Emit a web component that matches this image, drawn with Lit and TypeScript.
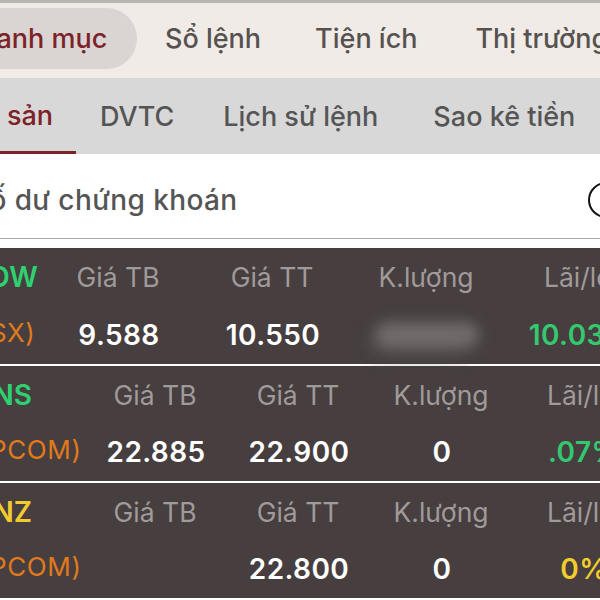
import { LitElement, html, css } from "lit";
import { customElement } from "lit/decorators.js";

type Row = {
  code: string;
  market: string;
  avg: string;
  price: string;
  qty: string;
  pnl: string;
  tone: string;
  wide?: boolean;
};

const ROWS: Row[] = [
  { code: "VOW", market: "(HSX)", avg: "9.588", price: "10.550", qty: "", pnl: "10.03%", tone: "up", wide: true },
  { code: "BNS", market: "(UPCOM)", avg: "22.885", price: "22.900", qty: "0", pnl: ".07%", tone: "up" },
  { code: "BNZ", market: "(UPCOM)", avg: "", price: "22.800", qty: "0", pnl: "0%", tone: "flat" },
];

@customElement("app-root")
export class AppRoot extends LitElement {
  renderRow(r: Row) {
    return html`
      <div class="row ${r.wide ? "wide" : ""}">
        <div class="code ${r.tone}">${r.code}</div>
        <div class="head">Giá TB</div>
        <div class="head">Giá TT</div>
        <div class="head">K.lượng</div>
        <div class="head last">Lãi/lỗ</div>
        <div class="market">${r.market}</div>
        <div class="val">${r.avg}</div>
        <div class="val">${r.price}</div>
        <div class="val">${r.qty || html`<div class="smudge"></div>`}</div>
        <div class="val pnl ${r.tone}">${r.pnl}</div>
      </div>
    `;
  }

  render() {
    return html`
      <div class="top">
        <div class="pill">Danh mục</div>
        <div class="t1">Sổ lệnh</div>
        <div class="t2">Tiện ích</div>
        <div class="t3">Thị trường</div>
      </div>
      <div class="sub">
        <div class="sub-active">Tài sản</div>
        <div class="s1">DVTC</div>
        <div class="s2">Lịch sử lệnh</div>
        <div class="s3">Sao kê tiền</div>
      </div>
      <div class="title">
        <span>Số dư chứng khoán</span>
        <div class="info">i</div>
      </div>
      <div class="rows">${ROWS.map((r) => this.renderRow(r))}</div>
    `;
  }

  static styles = css`
    :host {
      display: block;
      width: 600px;
      height: 600px;
      overflow: hidden;
      background: #fff;
      font-family: Inter, "Noto Sans", sans-serif;
      white-space: nowrap;
    }

    .top {
      display: flex;
      align-items: center;
      box-sizing: border-box;
      height: 78px;
      padding-bottom: 5px;
      border-top: 3px solid #b9b5b1;
      background: #f0ebe7;
      color: #56524f;
      font-size: 27px;
      font-weight: 500;
    }

    .pill {
      box-sizing: border-box;
      flex: none;
      width: 179px;
      height: 61px;
      margin-left: -42px;
      padding-left: 19px;
      line-height: 61px;
      border-radius: 31px;
      background: #dad5d2;
      color: #7c2229;
    }

    .t1 {
      margin-left: 28px;
    }
    .t2 {
      margin-left: 54px;
    }
    .t3 {
      margin-left: 58px;
    }

    .sub {
      display: flex;
      align-items: center;
      height: 76px;
      background: #d8d8d8;
      color: #555;
      font-size: 27px;
      font-weight: 500;
    }

    .sub-active {
      box-sizing: border-box;
      flex: none;
      width: 120px;
      height: 76px;
      margin-left: -44px;
      padding-left: 6px;
      line-height: 76px;
      border-bottom: 3px solid #7c2229;
      color: #7c2229;
    }

    .s1 {
      margin-left: 24px;
    }
    .s2 {
      margin-left: 49px;
    }
    .s3 {
      margin-left: 55px;
    }

    .title {
      display: flex;
      align-items: center;
      justify-content: space-between;
      box-sizing: border-box;
      height: 85px;
      padding-top: 8px;
      margin-left: -29px;
      margin-right: -24px;
      border-bottom: 1px solid #aaa;
      color: #555;
      font-size: 28px;
      font-weight: 500;
      letter-spacing: 0.4px;
    }

    .info {
      box-sizing: border-box;
      width: 36px;
      height: 36px;
      border: 2px solid #111;
      border-radius: 50%;
      color: #111;
      font-size: 20px;
      line-height: 32px;
      text-align: center;
    }

    .rows {
      display: flex;
      flex-direction: column;
      gap: 2px;
      margin-top: 9px;
    }

    .row {
      display: grid;
      grid-template-columns: 142px 142px 144px 142px 142px;
      grid-template-rows: 57px 58px;
      height: 115px;
      margin-left: -57px;
      background: #463e3f;
      align-items: center;
      justify-items: center;
    }

    .row.wide {
      grid-template-columns: 99px 154px 154px 154px 154px;
      height: 116px;
      grid-template-rows: 58px 58px;
    }

    .code,
    .market {
      justify-self: start;
    }

    .code {
      margin-left: 31px;
      font-size: 28px;
      font-weight: 600;
    }

    .wide .code {
      margin-left: 26px;
    }

    .code.up {
      color: #2fd06f;
    }
    .code.flat {
      color: #f2cb2e;
    }

    .market {
      margin-left: 17px;
      margin-bottom: 5px;
      color: #e07a1c;
      font-size: 26px;
      letter-spacing: 0.6px;
    }

    .head {
      margin-right: 2px;
      color: #a09a9a;
      font-size: 26.5px;
    }

    .head.last {
      margin-right: 6px;
    }

    .val {
      position: relative;
      color: #fff;
      font-size: 28px;
      font-weight: 600;
      letter-spacing: 0.4px;
    }

    .val.up {
      color: #35c96f;
    }
    .val.flat {
      color: #f2cb2e;
    }

    .smudge {
      width: 104px;
      height: 26px;
      border-radius: 14px;
      background: #716b6b;
      box-shadow: -8px 9px 12px -2px #544c4c;
      filter: blur(7px);
    }
  `;
}
